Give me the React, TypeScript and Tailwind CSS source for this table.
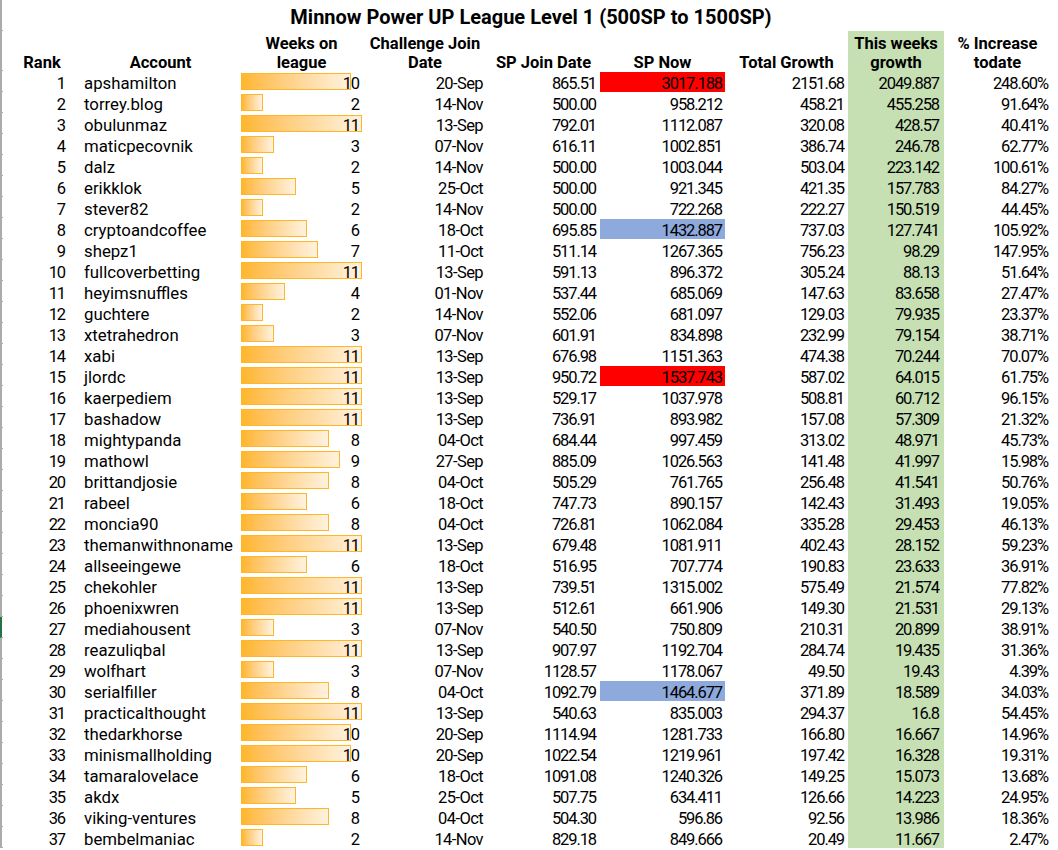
import React from "react";

type Row = [number, string, number, string, string, string, string, string, string, ("red" | "blue" | null)?];

const rows: Row[] = [
  [1, "apshamilton", 10, "20-Sep", "865.51", "3017.188", "2151.68", "2049.887", "248.60%", "red"],
  [2, "torrey.blog", 2, "14-Nov", "500.00", "958.212", "458.21", "455.258", "91.64%"],
  [3, "obulunmaz", 11, "13-Sep", "792.01", "1112.087", "320.08", "428.57", "40.41%"],
  [4, "maticpecovnik", 3, "07-Nov", "616.11", "1002.851", "386.74", "246.78", "62.77%"],
  [5, "dalz", 2, "14-Nov", "500.00", "1003.044", "503.04", "223.142", "100.61%"],
  [6, "erikklok", 5, "25-Oct", "500.00", "921.345", "421.35", "157.783", "84.27%"],
  [7, "stever82", 2, "14-Nov", "500.00", "722.268", "222.27", "150.519", "44.45%"],
  [8, "cryptoandcoffee", 6, "18-Oct", "695.85", "1432.887", "737.03", "127.741", "105.92%", "blue"],
  [9, "shepz1", 7, "11-Oct", "511.14", "1267.365", "756.23", "98.29", "147.95%"],
  [10, "fullcoverbetting", 11, "13-Sep", "591.13", "896.372", "305.24", "88.13", "51.64%"],
  [11, "heyimsnuffles", 4, "01-Nov", "537.44", "685.069", "147.63", "83.658", "27.47%"],
  [12, "guchtere", 2, "14-Nov", "552.06", "681.097", "129.03", "79.935", "23.37%"],
  [13, "xtetrahedron", 3, "07-Nov", "601.91", "834.898", "232.99", "79.154", "38.71%"],
  [14, "xabi", 11, "13-Sep", "676.98", "1151.363", "474.38", "70.244", "70.07%"],
  [15, "jlordc", 11, "13-Sep", "950.72", "1537.743", "587.02", "64.015", "61.75%", "red"],
  [16, "kaerpediem", 11, "13-Sep", "529.17", "1037.978", "508.81", "60.712", "96.15%"],
  [17, "bashadow", 11, "13-Sep", "736.91", "893.982", "157.08", "57.309", "21.32%"],
  [18, "mightypanda", 8, "04-Oct", "684.44", "997.459", "313.02", "48.971", "45.73%"],
  [19, "mathowl", 9, "27-Sep", "885.09", "1026.563", "141.48", "41.997", "15.98%"],
  [20, "brittandjosie", 8, "04-Oct", "505.29", "761.765", "256.48", "41.541", "50.76%"],
  [21, "rabeel", 6, "18-Oct", "747.73", "890.157", "142.43", "31.493", "19.05%"],
  [22, "moncia90", 8, "04-Oct", "726.81", "1062.084", "335.28", "29.453", "46.13%"],
  [23, "themanwithnoname", 11, "13-Sep", "679.48", "1081.911", "402.43", "28.152", "59.23%"],
  [24, "allseeingewe", 6, "18-Oct", "516.95", "707.774", "190.83", "23.633", "36.91%"],
  [25, "chekohler", 11, "13-Sep", "739.51", "1315.002", "575.49", "21.574", "77.82%"],
  [26, "phoenixwren", 11, "13-Sep", "512.61", "661.906", "149.30", "21.531", "29.13%"],
  [27, "mediahousent", 3, "07-Nov", "540.50", "750.809", "210.31", "20.899", "38.91%"],
  [28, "reazuliqbal", 11, "13-Sep", "907.97", "1192.704", "284.74", "19.435", "31.36%"],
  [29, "wolfhart", 3, "07-Nov", "1128.57", "1178.067", "49.50", "19.43", "4.39%"],
  [30, "serialfiller", 8, "04-Oct", "1092.79", "1464.677", "371.89", "18.589", "34.03%", "blue"],
  [31, "practicalthought", 11, "13-Sep", "540.63", "835.003", "294.37", "16.8", "54.45%"],
  [32, "thedarkhorse", 10, "20-Sep", "1114.94", "1281.733", "166.80", "16.667", "14.96%"],
  [33, "minismallholding", 10, "20-Sep", "1022.54", "1219.961", "197.42", "16.328", "19.31%"],
  [34, "tamaralovelace", 6, "18-Oct", "1091.08", "1240.326", "149.25", "15.073", "13.68%"],
  [35, "akdx", 5, "25-Oct", "507.75", "634.411", "126.66", "14.223", "24.95%"],
  [36, "viking-ventures", 8, "04-Oct", "504.30", "596.86", "92.56", "13.986", "18.36%"],
  [37, "bembelmaniac", 2, "14-Nov", "829.18", "849.666", "20.49", "11.667", "2.47%"],
];

function Gutter({ active = false }: { active?: boolean }) {
  return (
    <div
      className={
        "w-[3px] shrink-0 self-stretch border-b border-b-[#ababab] border-l-2 " +
        (active ? "border-l-[#217346]" : "border-l-[#ababab]")
      }
    />
  );
}

const num = "text-[16.5px] tracking-[-1.1px]";
const head = "flex flex-col justify-end items-center text-center pt-[2px] -mb-px";

export default function App() {
  return (
    <div
      className="w-[1058px] h-[850px] overflow-hidden bg-white text-black"
      style={{ fontFamily: "Roboto, 'Liberation Sans', sans-serif" }}
    >
      {/* Title row */}
      <div className="flex h-[31px]">
        <Gutter />
        <div className="w-[1048px] flex items-center justify-center pl-[8px] pt-[3px] text-[20px] font-bold leading-none">
          Minnow Power UP League Level 1 (500SP to 1500SP)
        </div>
      </div>

      {/* Header row */}
      <div className="flex h-[40px] text-[16.5px] font-bold leading-[19px]">
        <Gutter />
        <div className={"w-[78px] " + head}>Rank</div>
        <div className={"w-[159px] " + head}>Account</div>
        <div className={"w-[123px] " + head}>
          <span>Weeks on</span>
          <span>league</span>
        </div>
        <div className={"w-[124px] " + head}>
          <span>Challenge Join</span>
          <span>Date</span>
        </div>
        <div className={"w-[113px] " + head}>SP Join Date</div>
        <div className={"w-[125px] " + head}>SP Now</div>
        <div className={"w-[123px] " + head}>Total Growth</div>
        <div className="w-[96px] flex flex-col justify-end items-center text-center bg-[#c6e0b4]">
          <span className="relative top-px">This weeks</span>
          <span className="relative top-px">growth</span>
        </div>
        <div className={"w-[107px] " + head}>
          <span>% Increase</span>
          <span>todate</span>
        </div>
      </div>

      {/* Data rows */}
      {rows.map((r) => {
        const [rank, acct, weeks, cdate, spj, spn, tot, wk, pct, hl] = r;
        return (
          <div key={rank} className="flex h-[21px] text-[16.8px] leading-[21px]">
            <Gutter active={rank === 27} />
            <div className={"w-[78px] text-right pr-[16px] pt-[2px] " + num}>{rank}</div>
            <div className="w-[159px] pl-[3px] pt-[2px] whitespace-nowrap">{acct}</div>
            <div className="w-[123px] relative">
              <div
                className="absolute left-px top-[2px] h-[17px] border border-[#ffb628] bg-gradient-to-r from-[#ffb628] to-[#fff2de]"
                style={{ width: `${weeks * 11}px` }}
              />
              <div className={"relative text-right pr-[4px] pt-[2px] " + num}>{weeks}</div>
            </div>
            <div className="w-[124px] text-right pr-[4px] pt-[2px] text-[16.5px] tracking-[-0.6px]">{cdate}</div>
            <div className={"w-[113px] text-right pr-[4px] pt-[2px] " + num}>{spj}</div>
            <div
              className={
                "w-[125px] text-right pr-[3px] pt-[2px] border-t " +
                num +
                " " +
                (hl === "red"
                  ? "bg-[#ff0000] border-t-white"
                  : hl === "blue"
                  ? "bg-[#8ea9db] border-t-white"
                  : "border-t-transparent")
              }
            >
              <span className="relative -top-px">{spn}</span>
            </div>
            <div className={"w-[123px] text-right pr-[4px] pt-[2px] " + num}>{tot}</div>
            <div className={"w-[96px] text-right pr-[5px] pt-[2px] bg-[#c6e0b4] " + num}>{wk}</div>
            <div className={"w-[107px] text-right pr-[3px] pt-[2px] " + num}>{pct}</div>
          </div>
        );
      })}
    </div>
  );
}
